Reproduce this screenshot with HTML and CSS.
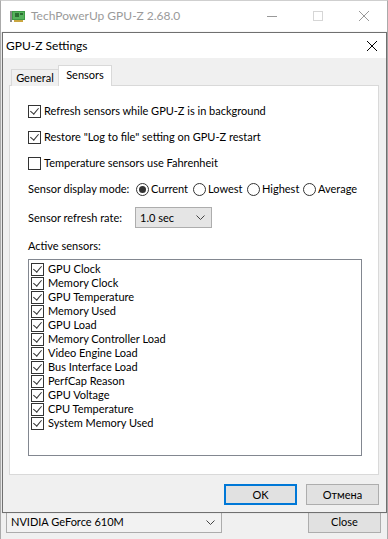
FILE: index.html
```html
<!DOCTYPE html>
<html>
<head>
<meta charset="utf-8">
<link rel="stylesheet" href="styles.css">
</head>
<body>
<div class="mainwin">
  <div class="titlebar">
    <svg class="appicon" width="15" height="12" viewBox="0 0 15 12">
      <rect x="0" y="1" width="2" height="11" fill="#8a8a8a"/>
      <rect x="2" y="1" width="13" height="9" fill="#3d9a45"/>
      <rect x="3" y="2" width="11" height="7" fill="#55b35c"/>
      <rect x="5" y="3" width="4" height="4" fill="#2c6e33"/>
      <rect x="10" y="3" width="3" height="2" fill="#2c6e33"/>
      <rect x="4" y="10" width="9" height="2" fill="#c9a640"/>
    </svg>
    <span class="wintitle">TechPowerUp GPU-Z 2.68.0</span>
    <div class="wincontrols">
      <svg width="46" height="30" viewBox="0 0 46 30"><line x1="18" y1="15.5" x2="28" y2="15.5" stroke="#999" stroke-width="1"/></svg>
      <svg width="46" height="30" viewBox="0 0 46 30"><rect x="18.5" y="10.5" width="9" height="9" fill="none" stroke="#d6d6d6" stroke-width="1"/></svg>
      <svg width="46" height="30" viewBox="0 0 46 30"><path d="M18 10 L28 20 M28 10 L18 20" stroke="#999" stroke-width="1"/></svg>
    </div>
  </div>
  <div class="winbody"></div>
  <div class="winbottom">
    <div class="gpucombo"><span>NVIDIA GeForce 610M</span>
      <svg width="9" height="5" viewBox="0 0 9 5"><polyline points="0.5,0.5 4.5,4.5 8.5,0.5" fill="none" stroke="#444" stroke-width="1"/></svg>
    </div>
    <div class="btn closebtn">Close</div>
  </div>
</div>

<div class="dialog">
  <div class="dtitle">
    <span>GPU-Z Settings</span>
    <svg class="dclose" width="12" height="12" viewBox="0 0 12 12"><path d="M1 1 L11 11 M11 1 L1 11" stroke="#000" stroke-width="1"/></svg>
  </div>
  <div class="dbody">
    <div class="tabs">
      <div class="tab">General</div>
      <div class="tab active">Sensors</div>
    </div>
    <div class="panel">
      <div class="row"><span class="cb checked"></span><span>Refresh sensors while GPU-Z is in background</span></div>
      <div class="row"><span class="cb checked"></span><span>Restore "Log to file" setting on GPU-Z restart</span></div>
      <div class="row"><span class="cb"></span><span>Temperature sensors use Fahrenheit</span></div>
      <div class="row">
        <span class="lbl">Sensor display mode:</span>
        <span class="opt w1"><span class="radio on"></span>Current</span>
        <span class="opt w2"><span class="radio"></span>Lowest</span>
        <span class="opt w3"><span class="radio"></span>Highest</span>
        <span class="opt"><span class="radio"></span>Average</span>
      </div>
      <div class="row tall">
        <span class="lbl lbl2">Sensor refresh rate:</span>
        <div class="combo"><span>1.0 sec</span>
          <svg width="9" height="5" viewBox="0 0 9 5"><polyline points="0.5,0.5 4.5,4.5 8.5,0.5" fill="none" stroke="#444" stroke-width="1"/></svg>
        </div>
      </div>
      <div class="row"><span>Active sensors:</span></div>
      <div class="listbox">
        <div class="item"><span class="cb checked"></span>GPU Clock</div>
        <div class="item"><span class="cb checked"></span>Memory Clock</div>
        <div class="item"><span class="cb checked"></span>GPU Temperature</div>
        <div class="item"><span class="cb checked"></span>Memory Used</div>
        <div class="item"><span class="cb checked"></span>GPU Load</div>
        <div class="item"><span class="cb checked"></span>Memory Controller Load</div>
        <div class="item"><span class="cb checked"></span>Video Engine Load</div>
        <div class="item"><span class="cb checked"></span>Bus Interface Load</div>
        <div class="item"><span class="cb checked"></span>PerfCap Reason</div>
        <div class="item"><span class="cb checked"></span>GPU Voltage</div>
        <div class="item"><span class="cb checked"></span>CPU Temperature</div>
        <div class="item"><span class="cb checked"></span>System Memory Used</div>
      </div>
    </div>
    <div class="buttons">
      <div class="btn okbtn">OK</div>
      <div class="btn">Отмена</div>
    </div>
  </div>
</div>
</body>
</html>
```
FILE: styles.css
```css
html, body {
  margin: 0;
  padding: 0;
}
body {
  width: 388px;
  height: 539px;
  overflow: hidden;
  background: #f0f0f0;
  font-family: Lato, "Noto Sans", "Liberation Sans", sans-serif;
  font-size: 11px;
  line-height: 14px;
  color: #000;
  position: relative;
}
.mainwin {
  height: 539px;
  display: flex;
  flex-direction: column;
  box-sizing: border-box;
  border-left: 1px solid #aaaaaa;
  border-right: 1px solid #aaaaaa;
  border-top: 1px solid #cfcfcf;
}
.titlebar {
  height: 31px;
  background: #fff;
  display: flex;
  align-items: center;
  position: relative;
}
.appicon {
  margin-left: 9px;
  margin-top: -1px;
}
.wintitle {
  margin-left: 6px;
  color: #9a9a9a;
  font-size: 12px;
  margin-top: -2px;
}
.wincontrols {
  margin-left: auto;
  display: flex;
  margin-top: -1px;
}
.wincontrols svg {
  display: block;
}
.winbody {
  flex: 1;
}
.winbottom {
  display: flex;
  align-items: flex-start;
  padding: 0 5px 6px 5px;
  height: 22px;
}
.gpucombo {
  width: 216px;
  height: 22px;
  box-sizing: border-box;
  border: 1px solid #acacac;
  background: #f2f2f2;
  display: flex;
  align-items: center;
  justify-content: space-between;
  padding: 0 6px 0 4px;
}
.btn {
  width: 73px;
  height: 21px;
  box-sizing: border-box;
  border: 1px solid #adadad;
  background: #e1e1e1;
  display: flex;
  align-items: center;
  justify-content: center;
}
.closebtn {
  margin-left: auto;
  width: 73px;
  height: 22px;
  margin-right: 1px;
}

.dialog {
  position: absolute;
  left: 2px;
  top: 32px;
  width: 385px;
  height: 481px;
  box-sizing: border-box;
  border: 1px solid #707070;
  background: #f0f0f0;
  display: flex;
  flex-direction: column;
  box-shadow: 0 0 1px rgba(0,0,0,0.2);
}
.dtitle {
  height: 25px;
  background: #fff;
  display: flex;
  align-items: center;
  padding-left: 3px;
  flex-shrink: 0;
  font-size: 12px;
}
.dclose {
  margin-left: auto;
  margin-right: 8px;
}
.dbody {
  flex: 1;
  padding: 7px 6px 0 6px;
  display: flex;
  flex-direction: column;
}
.tabs {
  display: flex;
  align-items: flex-end;
  height: 21px;
  margin-bottom: -1px;
  padding-left: 2px;
  position: relative;
  z-index: 1;
}
.tab {
  height: 17px;
  box-sizing: border-box;
  border: 1px solid #d9d9d9;
  border-bottom: none;
  background: #f0f0f0;
  display: flex;
  align-items: center;
  justify-content: center;
  width: 48px;
}
.tab.active {
  height: 21px;
  width: 54px;
  background: #fff;
  margin-left: -1px;
  align-items: flex-start;
  padding-top: 2px;
}
.panel {
  width: 370px;
  height: 390px;
  box-sizing: border-box;
  border: 1px solid #d9d9d9;
  background: #fff;
  padding: 17px 0 0 18px;
  display: flex;
  flex-direction: column;
}
.row {
  height: 16px;
  display: flex;
  align-items: center;
  white-space: nowrap;
}
.row + .row {
  margin-top: 10px;
}
.row.tall {
  height: 21px;
}
.row .cb {
  margin-right: 3px;
}
.cb {
  width: 13px;
  height: 13px;
  box-sizing: border-box;
  border: 1px solid #333;
  background: #fff;
  flex-shrink: 0;
  position: relative;
}
.cb.checked::after {
  content: "";
  position: absolute;
  left: 3px;
  top: 0px;
  width: 4px;
  height: 7px;
  border-right: 1px solid #333;
  border-bottom: 1px solid #333;
  transform: rotate(40deg);
  transform-origin: center;
}
.lbl {
  width: 108px;
  flex-shrink: 0;
}
.lbl2 {
  width: 107px;
}
.opt {
  display: flex;
  align-items: center;
  flex-shrink: 0;
}
.w1 { width: 57px; }
.w2 { width: 54px; }
.w3 { width: 56px; }
.radio {
  width: 13px;
  height: 13px;
  box-sizing: border-box;
  border: 1px solid #333;
  border-radius: 50%;
  background: #fff;
  margin-right: 2px;
  display: flex;
  align-items: center;
  justify-content: center;
}
.radio.on::after {
  content: "";
  width: 7px;
  height: 7px;
  border-radius: 50%;
  background: #333;
}
.combo {
  width: 77px;
  height: 21px;
  box-sizing: border-box;
  border: 1px solid #adadad;
  background: #e5e5e5;
  display: flex;
  align-items: center;
  justify-content: space-between;
  padding: 0 6px 0 4px;
}
.listbox {
  margin-top: 5px;
  width: 334px;
  height: 197px;
  box-sizing: border-box;
  border: 1px solid #828790;
  background: #fff;
  padding: 2px 0 0 2px;
}
.item {
  height: 14px;
  display: flex;
  align-items: center;
  white-space: nowrap;
}
.item .cb {
  margin-right: 4px;
}
.buttons {
  display: flex;
  justify-content: flex-end;
  gap: 9px;
  margin-top: 9px;
  width: 370px;
}
.okbtn {
  border: 2px solid #0078d7;
}
```
